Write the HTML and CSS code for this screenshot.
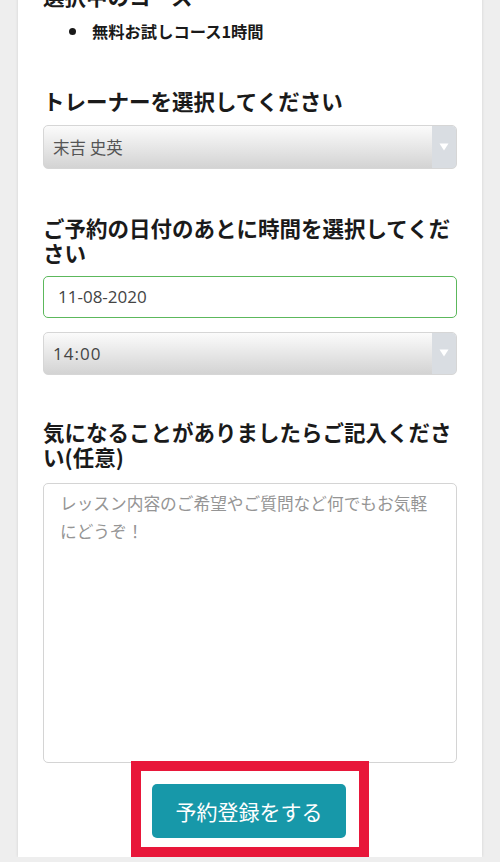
FILE: index.html
```html
<!DOCTYPE html>
<html lang="ja">
<head>
<meta charset="utf-8">
<title>予約フォーム</title>
<link rel="stylesheet" href="styles.css">
</head>
<body>
<main class="page">
  <h2 class="label label-first">選択中のコース</h2>
  <ul class="course-list">
    <li>無料お試しコース1時間</li>
  </ul>

  <h2 class="label label-trainer">トレーナーを選択してください</h2>
  <div class="select-box select-trainer">
    <span class="select-value">末吉 史英</span>
    <span class="select-arrow"><svg width="10" height="8" viewBox="0 0 10 8"><path d="M0.5 0.5h9L5 7.5z" fill="#fff"/></svg></span>
  </div>

  <h2 class="label label-date">ご予約の日付のあとに時間を選択してください</h2>
  <input class="date-input" type="text" value="11-08-2020">
  <div class="select-box select-time">
    <span class="select-value">14:00</span>
    <span class="select-arrow"><svg width="10" height="8" viewBox="0 0 10 8"><path d="M0.5 0.5h9L5 7.5z" fill="#fff"/></svg></span>
  </div>

  <h2 class="label label-note">気になることがありましたらご記入ください(任意)</h2>
  <textarea class="note" placeholder="レッスン内容のご希望やご質問など何でもお気軽にどうぞ！"></textarea>

  <div class="submit-row">
    <div class="highlight">
      <button class="submit" type="button">予約登録をする</button>
    </div>
  </div>
</main>
</body>
</html>
```

FILE: styles.css
```css
html, body {
  margin: 0;
  padding: 0;
}
body {
  background: #eeeeee;
  font-family: "Noto Sans CJK JP", "Noto Sans", sans-serif;
  color: #1a1a1a;
}
.page {
  display: block;
  margin: 0 18px;
  padding: 0 25px;
  background: #fff;
  height: 874px;
  box-sizing: border-box;
  box-shadow: 0 0 3px rgba(0,0,0,0.12);
}
.label {
  margin: 0;
  font-size: 21.5px;
  line-height: 25px;
  font-weight: 700;
  color: #1a1a1a;
}
.label-first {
  margin-top: -17px;
}
.course-list {
  margin: 11px 0 0;
  padding-left: 26px;
  list-style: none;
  font-size: 16.3px;
  line-height: 24px;
  font-weight: 700;
}
.course-list li {
  display: flex;
  align-items: center;
}
.course-list li::before {
  content: "";
  width: 7px;
  height: 7px;
  border-radius: 50%;
  background: #1a1a1a;
  margin-right: 16px;
}
.label-trainer {
  margin-top: 45px;
}
.select-box {
  display: flex;
  align-items: stretch;
  box-sizing: border-box;
  border: 1px solid #d6d6d6;
  border-radius: 5px;
  overflow: hidden;
  background: linear-gradient(#fbfbfb, #d3d3d3);
}
.select-trainer {
  margin-top: 11.5px;
  height: 44px;
}
.select-time {
  margin-top: 14px;
  height: 43px;
}
.select-value {
  flex: 1;
  display: flex;
  align-items: center;
  padding-left: 9px;
  font-size: 16.5px;
  color: #555;
}
.select-time .select-value {
  font-family: "Open Sans", sans-serif;
  font-size: 17px;
  letter-spacing: 1px;
  color: #444;
}
.select-arrow {
  width: 24px;
  display: flex;
  align-items: center;
  justify-content: center;
  background: #d9dde2;
}
.label-date {
  margin-top: 46.5px;
}
.date-input {
  display: block;
  box-sizing: border-box;
  width: 100%;
  height: 42px;
  margin: 10.5px 0 0;
  padding: 0 14px;
  border: 1.5px solid #5cb85c;
  border-radius: 5px;
  font-family: "Open Sans", sans-serif;
  font-size: 17px;
  color: #444;
  background: #fff;
  outline: none;
}
.label-note {
  margin-top: 44.5px;
}
.note {
  display: block;
  box-sizing: border-box;
  width: 100%;
  height: 280px;
  margin: 13.5px 0 0;
  padding: 5px 22px 5px 16px;
  border: 1px solid #d4d4d4;
  border-radius: 5px;
  resize: none;
  font-family: "Noto Sans CJK JP", sans-serif;
  font-size: 16.7px;
  line-height: 28px;
  color: #444;
}
.note::placeholder {
  color: #959595;
}
.submit-row {
  display: flex;
  justify-content: center;
  margin-top: -2px;
}
.highlight {
  border: 10px solid #e8173a;
  padding: 13px 13px 9px 11px;
  background: #fff;
}
.submit {
  display: block;
  width: 194px;
  height: 54px;
  border: none;
  border-radius: 5px;
  background: #1798a9;
  color: #fff;
  font-family: "Noto Sans CJK JP", sans-serif;
  font-size: 21px;
  font-weight: 400;
  padding: 0;
}
```
